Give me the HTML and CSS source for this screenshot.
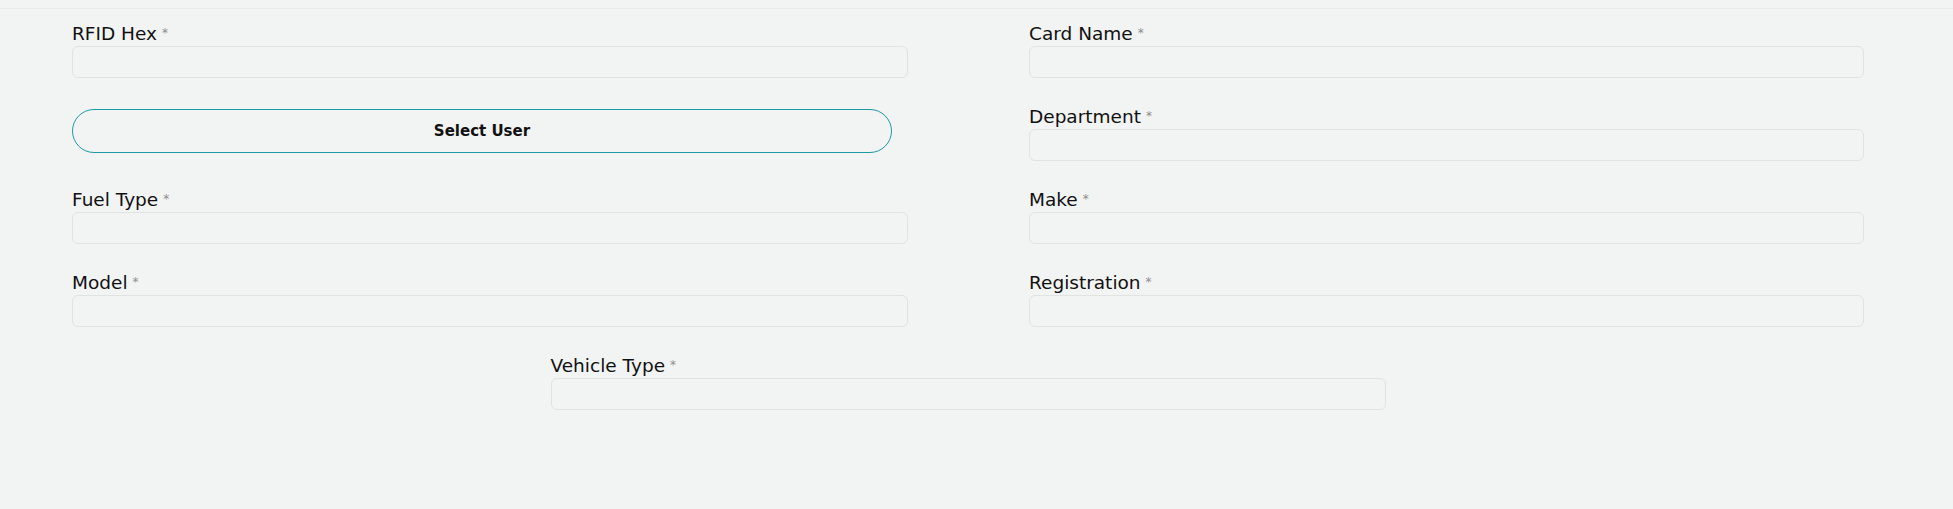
FILE: index.html
```html
<!DOCTYPE html>
<html lang="en">
<head>
<meta charset="utf-8">
<title>Card Form</title>
<link rel="stylesheet" href="styles.css">
</head>
<body>
<div class="topbar"></div>
<form class="form">
  <div class="field">
    <label class="label">RFID Hex<span class="req">*</span></label>
    <input class="input" type="text">
  </div>
  <div class="field">
    <label class="label">Card Name<span class="req">*</span></label>
    <input class="input" type="text">
  </div>
  <div class="field field-btn">
    <button type="button" class="select-btn">Select User</button>
  </div>
  <div class="field">
    <label class="label">Department<span class="req">*</span></label>
    <input class="input" type="text">
  </div>
  <div class="field">
    <label class="label">Fuel Type<span class="req">*</span></label>
    <input class="input" type="text">
  </div>
  <div class="field">
    <label class="label">Make<span class="req">*</span></label>
    <input class="input" type="text">
  </div>
  <div class="field">
    <label class="label">Model<span class="req">*</span></label>
    <input class="input" type="text">
  </div>
  <div class="field">
    <label class="label">Registration<span class="req">*</span></label>
    <input class="input" type="text">
  </div>
  <div class="field field-center">
    <label class="label">Vehicle Type<span class="req">*</span></label>
    <input class="input" type="text">
  </div>
</form>
</body>
</html>
```
FILE: styles.css
```css
html, body {
  margin: 0;
  padding: 0;
  background: #f2f3f3;
  font-family: "DejaVu Sans", "Liberation Sans", sans-serif;
  color: #111;
}
.topbar {
  height: 8px;
  border-bottom: 1px solid #e8eaea;
}
.form {
  display: grid;
  grid-template-columns: 836px 835px;
  column-gap: 121px;
  row-gap: 28px;
  padding: 14px 0 0 72px;
}
.field {
  display: flex;
  flex-direction: column;
  gap: 1px;
}
.label {
  display: block;
  height: 22px;
  font-size: 18.5px;
  line-height: 22px;
  font-weight: 400;
  color: #111;
}
.req {
  font-size: 12px;
  line-height: 0;
  color: #8d8d8d;
  margin-left: 5px;
  vertical-align: 3px;
}
.input {
  box-sizing: border-box;
  height: 32px;
  width: 100%;
  margin: 0;
  border: 1px solid #e1e3e3;
  border-radius: 6px;
  background: #f2f3f3;
  font: inherit;
  outline: none;
}
.field-btn {
  justify-content: flex-start;
}
.select-btn {
  box-sizing: border-box;
  margin-top: 2.5px;
  width: 820px;
  height: 44px;
  border: 1px solid #1e9aa5;
  border-radius: 22px;
  background: transparent;
  font-family: "DejaVu Sans", "Liberation Sans", sans-serif;
  font-weight: 700;
  font-size: 15px;
  color: #111;
  cursor: pointer;
}
.field-center {
  grid-column: 1 / span 2;
  justify-self: center;
  width: 835px;
}
```
